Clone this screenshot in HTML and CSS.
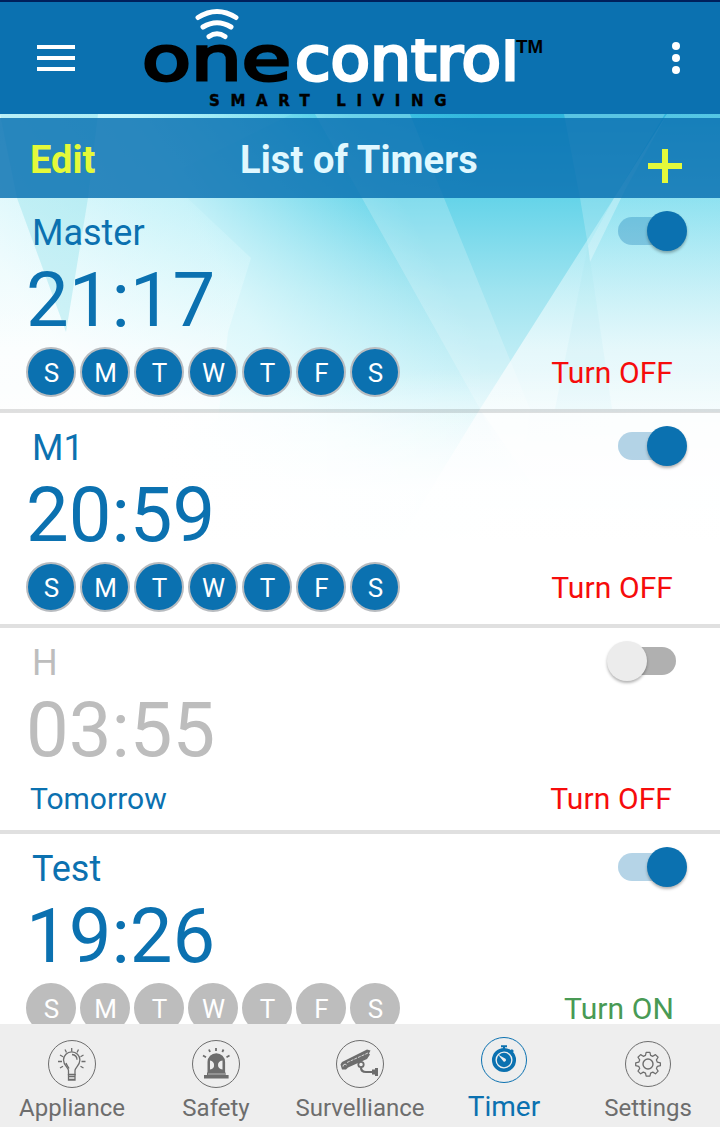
FILE: index.html
```html
<!DOCTYPE html>
<html lang="en">
<head>
  <meta charset="UTF-8">
  <meta name="viewport" content="width=device-width, initial-scale=1.0">
  <title>List of Timers</title>
  <link rel="stylesheet" href="styles.css">
</head>
<body>
  <svg class="backdrop" viewBox="0 0 720 1127" aria-hidden="true">
    <defs>
      <linearGradient id="sky" gradientUnits="userSpaceOnUse" x1="0" y1="114" x2="0" y2="540">
        <stop offset="0" stop-color="#2fb6dd"/>
        <stop offset="0.2" stop-color="#66d4e9"/>
        <stop offset="0.42" stop-color="#a0e4f0"/>
        <stop offset="0.68" stop-color="#d6f4f9"/>
        <stop offset="1" stop-color="#ffffff"/>
      </linearGradient>
      <linearGradient id="leftGlow" gradientUnits="userSpaceOnUse" x1="60" y1="370" x2="390" y2="180">
        <stop offset="0" stop-color="#fff" stop-opacity="0.9"/>
        <stop offset="0.5" stop-color="#f0feff" stop-opacity="0.68"/>
        <stop offset="1" stop-color="#e0fcff" stop-opacity="0"/>
      </linearGradient>
      <linearGradient id="topLeft" gradientUnits="userSpaceOnUse" x1="100" y1="0" x2="480" y2="0">
        <stop offset="0" stop-color="#74eef8" stop-opacity="0.9"/>
        <stop offset="1" stop-color="#74eef8" stop-opacity="0"/>
      </linearGradient>
      <linearGradient id="glow" gradientUnits="userSpaceOnUse" x1="0" y1="114" x2="0" y2="350">
        <stop offset="0" stop-color="#b9f5fb" stop-opacity="0.15"/>
        <stop offset="1" stop-color="#fff" stop-opacity="0.45"/>
      </linearGradient>
      <linearGradient id="glowRight" gradientUnits="userSpaceOnUse" x1="0" y1="114" x2="0" y2="350">
        <stop offset="0" stop-color="#b9f5fb" stop-opacity="0.25"/>
        <stop offset="1" stop-color="#fff" stop-opacity="0.62"/>
      </linearGradient>
      <linearGradient id="lowSides" gradientUnits="userSpaceOnUse" x1="150" y1="0" x2="720" y2="0">
        <stop offset="0" stop-color="#fff"/>
        <stop offset="0.56" stop-color="#fff" stop-opacity="0.1"/>
        <stop offset="1" stop-color="#fff" stop-opacity="0.5"/>
      </linearGradient>
      <linearGradient id="fadeLow" gradientUnits="userSpaceOnUse" x1="0" y1="370" x2="0" y2="490">
        <stop offset="0" stop-color="#fff" stop-opacity="0"/>
        <stop offset="1" stop-color="#fff" stop-opacity="0.85"/>
      </linearGradient>
    </defs>
    <rect width="720" height="1127" fill="#fff"/>
    <rect y="114" width="720" height="426" fill="url(#sky)"/>
    <rect y="114" width="480" height="84" fill="url(#topLeft)"/>
    <rect y="114" width="480" height="426" fill="url(#leftGlow)"/>
    <polygon points="0,114 292,114 165,177 251,258 228,332 218,420 0,540" fill="url(#glow)"/>
    <polygon points="17,198 88,198 66,332 58,310" fill="#8edfeb" opacity="0.38"/>
    <polygon points="0,114 98,114 88,198 17,198" fill="#3cc9df" opacity="0.2"/>
    <polygon points="315,114 480,409 520,490 530,409 444,198 410,114" fill="#fff" opacity="0.2"/>
    <polygon points="564,114 580,198 588,246 614,198 665,114" fill="#fff" opacity="0.2"/>
    <polygon points="667,114 720,114 720,540 400,540 480,409 614,198" fill="url(#glowRight)"/>
    <polygon points="667,114 614,198 588,246 590,262 625,190" fill="#fff" opacity="0.3"/>
    <polygon points="588,246 612,409 555,409" fill="#7fdcea" opacity="0.08"/>
    <rect y="370" width="720" height="170" fill="url(#fadeLow)"/>
    <rect y="412" width="720" height="128" fill="url(#lowSides)"/>
    <polygon points="482,412 720,412 720,540 570,540" fill="#fff" opacity="0.45"/>
  </svg>

  <div class="app">
    <header class="header">
      <svg class="menu-icon" viewBox="0 0 38 26">
        <path d="M0 2h38M0 13h38M0 24h38" stroke="#fff" stroke-width="4"/>
      </svg>
      <svg class="logo" viewBox="0 0 412 108">
        <defs>
          <clipPath id="logoClip"><rect x="158" y="35" width="230" height="50"/></clipPath>
        </defs>
        <g fill="none" stroke="#fff" stroke-width="5" stroke-linecap="round">
          <path d="M62 13.500Q81 1.500 100 13.500"/>
          <path d="M67 23Q81 14.500 95 23"/>
          <path d="M73 32.500Q81 27 89 32.500"/>
        </g>
        <g class="logo-word">
          <text x="6" y="76" textLength="149" lengthAdjust="spacingAndGlyphs" fill="#000" stroke="#000">one</text>
          <text x="159" y="76" textLength="224" lengthAdjust="spacingAndGlyphs" fill="#fff" stroke="#fff" clip-path="url(#logoClip)">control</text>
        </g>
        <text class="logo-tm" x="380" y="49" textLength="27" lengthAdjust="spacingAndGlyphs">TM</text>
        <text class="logo-tag" x="73" y="102">SMART LIVING</text>
      </svg>
      <svg class="more-icon" viewBox="0 0 8 32">
        <circle cx="4" cy="4" r="4"/><circle cx="4" cy="16" r="4"/><circle cx="4" cy="28" r="4"/>
      </svg>
    </header>

    <div class="title-bar">
      <span class="edit">Edit</span>
      <h1 class="title">List of Timers</h1>
      <svg class="add-icon" viewBox="0 0 34 34">
        <path d="M17 0v34M0 17h34" stroke="#e4f93a" stroke-width="6"/>
      </svg>
    </div>

    <main class="timers">
      <section class="timer">
        <div class="timer-head"><span class="name">Master</span><span class="switch on"></span></div>
        <div class="time">21:17</div>
        <div class="timer-foot">
          <div class="days"><span>S</span><span>M</span><span>T</span><span>W</span><span>T</span><span>F</span><span>S</span></div>
          <span class="action">Turn OFF</span>
        </div>
      </section>
      <section class="timer">
        <div class="timer-head"><span class="name">M1</span><span class="switch on"></span></div>
        <div class="time">20:59</div>
        <div class="timer-foot">
          <div class="days"><span>S</span><span>M</span><span>T</span><span>W</span><span>T</span><span>F</span><span>S</span></div>
          <span class="action">Turn OFF</span>
        </div>
      </section>
      <section class="timer once disabled">
        <div class="timer-head"><span class="name">H</span><span class="switch"></span></div>
        <div class="time">03:55</div>
        <div class="timer-foot">
          <span class="when">Tomorrow</span>
          <span class="action">Turn OFF</span>
        </div>
      </section>
      <section class="timer">
        <div class="timer-head"><span class="name">Test</span><span class="switch on"></span></div>
        <div class="time">19:26</div>
        <div class="timer-foot">
          <div class="days off"><span>S</span><span>M</span><span>T</span><span>W</span><span>T</span><span>F</span><span>S</span></div>
          <span class="action turn-on">Turn ON</span>
        </div>
      </section>
    </main>

    <nav class="tabs">
      <div class="tab">
        <svg class="tab-icon" viewBox="0 0 48 48" fill="none" stroke="currentColor">
          <circle cx="24" cy="24" r="23.500"/>
          <path d="M20.500 34.500v-4c0-3-5-5-5-10.500a8.200 8.200 0 0 1 16.400 0c0 5.500-4.900 7.500-4.900 10.500v4z" stroke-width="1.300"/>
          <path d="M20.500 36.500h6.500M21 39.500h5.500M20.500 34v6h6.500v-6M24 14.500c3 .3 5 2.300 5 5.300M18 23c.5 2 2 3.500 3 5.500" stroke-width="1.300"/>
          <path d="M23.700 8v3.500M17 9.500l1.500 3M30.500 9.500l-1.500 3M12 15l3 1.700M35.500 15l-3 1.700M10 21.500h4M33.500 21.500h4M12 28l3-1.800M35.500 28l-3-1.800" stroke-width="1.300"/>
        </svg>
        <span class="tab-label">Appliance</span>
      </div>
      <div class="tab">
        <svg class="tab-icon" viewBox="0 0 48 48" fill="none" stroke="currentColor">
          <circle cx="24" cy="24" r="23.500"/>
          <path d="M12 35h3v-2.500h.5V22a8.700 8.700 0 0 1 17.600 0v10.500h.5V35h3v3.500H12z" fill="currentColor" stroke="none"/>
          <path d="M18 20.500c5 0 6 9 0 9zM30.500 20.500c-6 0-6 9 0 9z" fill="#eee" stroke="none"/>
          <path d="M16 34h17" stroke="#eee" stroke-width=".6"/>
          <path d="M24 8v3M17 9.500l1 2.500M31.500 9.500l-1.200 2.500M11 15.500l3 1.700M37.500 15.500l-3 1.700" stroke-width="1.800"/>
        </svg>
        <span class="tab-label">Safety</span>
      </div>
      <div class="tab">
        <svg class="tab-icon" viewBox="0 0 48 48" fill="none" stroke="currentColor">
          <circle cx="24" cy="24" r="23.500"/>
          <path d="M4.500 24.500L6 22 31 9.500l3.500 1-1.500 3 1 1-3 4.500-19 8.500-2 2H6z" fill="currentColor" stroke="none"/>
          <path d="M11 22.500L32 13" stroke="#eee" stroke-width=".8" stroke-dasharray="3 1"/>
          <path d="M7 26.500a2 2 0 0 1 3.500-1.500" stroke="#eee"/>
          <circle cx="25" cy="24.500" r="2.700" stroke-width="1.800"/>
          <path d="M25 27.500q0 4.500 5 4.500h7" stroke-width="2.200"/>
          <path d="M36 29.500h3V28h3v8h-3v-1.500h-3z" fill="currentColor" stroke="none"/>
        </svg>
        <span class="tab-label">Survelliance</span>
      </div>
      <div class="tab active">
        <svg class="tab-icon" viewBox="0 0 46 46" fill="none" stroke="currentColor">
          <circle cx="23" cy="23" r="22.500"/>
          <circle cx="23" cy="23" r="10.300" stroke-width="3.500"/>
          <circle cx="23" cy="23" r="7.200" fill="currentColor" stroke="none"/>
          <path d="M23 13V9.500M20 9.300h6" stroke-width="2"/>
          <path d="M30 13l2 2" stroke-width="2.500"/>
          <path d="M17 17.500l7.500 4.300a1.500 1.500 0 0 1-2.200 2.400z" fill="#eee" stroke="none"/>
        </svg>
        <span class="tab-label">Timer</span>
      </div>
      <div class="tab settings">
        <svg class="tab-icon" viewBox="0 0 46 46" fill="none" stroke="currentColor">
          <circle cx="23" cy="23" r="22.500"/>
          <circle cx="23" cy="23" r="5" stroke-width="1.400"/>
          <path d="M21 11h4l.7 3.200 2.300 1 2.800-1.800 2.800 2.800-1.800 2.800 1 2.300 3.200.7v3l-3.200.7-1 2.300 1.800 2.800-2.800 2.800-2.800-1.800-2.300 1-.7 3.200h-4l-.7-3.200-2.300-1-2.800 1.800-2.800-2.800 1.800-2.800-1-2.300-3.200-.7v-3l3.200-.7 1-2.300-1.800-2.800 2.800-2.800 2.800 1.800 2.300-1z" transform="translate(1.200 0.900) scale(0.950)" stroke-width="1.300" stroke-linejoin="round"/>
        </svg>
        <span class="tab-label">Settings</span>
      </div>
    </nav>
  </div>
</body>
</html>
```
FILE: styles.css
```css
* {
  box-sizing: border-box;
}
body {
  margin: 0;
  font-family: Roboto, "Liberation Sans", sans-serif;
  background-color: #fff;
  color: #0b71b0;
}
.backdrop {
  position: absolute;
  top: 0;
  left: 0;
  width: 720px;
  height: 1127px;
}
.app {
  position: relative;
  width: 720px;
  height: 1127px;
  display: flex;
  flex-direction: column;
  overflow: hidden;
}
.header {
  height: 114px;
  flex-shrink: 0;
  border-top: 2px solid #00205b;
  background-color: #0b71b0;
  display: flex;
  align-items: center;
  padding: 0 40px 0 37px;
}
.menu-icon {
  width: 38px;
  height: 26px;
}
.logo {
  width: 412px;
  height: 108px;
  margin-left: 61px;
}
.logo-word {
  font-family: "DejaVu Sans", sans-serif;
  font-size: 60px;
  stroke-width: 3px;
}
.logo-tm {
  font-family: "Liberation Sans", sans-serif;
  font-size: 19px;
  font-weight: bold;
}
.logo-tag {
  font-family: "DejaVu Sans", sans-serif;
  font-size: 15px;
  font-weight: bold;
  letter-spacing: 10.6px;
  stroke: #000;
  stroke-width: 0.4px;
}
.more-icon {
  width: 8px;
  height: 32px;
  margin-left: auto;
  fill: #fff;
}
.title-bar {
  height: 80px;
  flex-shrink: 0;
  margin-top: 4px;
  padding: 0 38px 0 30px;
  display: grid;
  grid-template-columns: 210px 1fr auto;
  align-items: center;
  background-color: rgba(11, 113, 178, 0.84);
  font-size: 38px;
  font-weight: bold;
}
.edit {
  color: #e4f93a;
  line-height: 44px;
  margin-top: 4px;
}
.title {
  margin: 4px 0 0;
  font-size: 38px;
  line-height: 44px;
  letter-spacing: 0.1px;
  color: #e0f8ff;
}
.add-icon {
  width: 34px;
  height: 34px;
  margin-top: 16px;
}
.timers {
  flex: 1;
  min-height: 0;
  overflow: hidden;
}
.timer {
  height: 215px;
  padding: 14px 33px 0 26px;
  border-bottom: 4px solid rgba(0, 0, 0, 0.12);
}
.timer.once {
  height: 206px;
}
.timer-head {
  display: flex;
  justify-content: space-between;
  height: 42px;
}
.name {
  font-size: 36px;
  line-height: 42px;
  padding-left: 6px;
}
.time {
  font-size: 76px;
  line-height: 89px;
  margin-top: 2px;
}
.switch {
  position: relative;
  width: 58px;
  height: 28px;
  margin: 5px 11px 0 0;
  border-radius: 14px;
  background-color: #b0b0b0;
}
.switch::after {
  content: "";
  position: absolute;
  top: -6px;
  left: -11px;
  width: 40px;
  height: 40px;
  border-radius: 50%;
  background-color: #ececec;
  box-shadow: 0 2px 3px rgba(0, 0, 0, 0.3);
}
.switch.on {
  background-color: rgba(11, 113, 176, 0.3);
}
.switch.on::after {
  left: 29px;
  background-color: #0b71b0;
}
.timer-foot {
  display: flex;
  justify-content: space-between;
  align-items: center;
  height: 50px;
  margin-top: 2px;
  padding-right: 14px;
}
.once .timer-foot {
  margin-top: -2px;
  padding-right: 15px;
}
.days {
  display: flex;
  gap: 4px;
}
.days span {
  width: 50px;
  height: 50px;
  border: 2px solid #b8bcc0;
  border-radius: 50%;
  background-color: #0b71b0;
  color: #fff;
  font-size: 26px;
  line-height: 48px;
  text-align: center;
  padding-left: 1px;
}
.days.off span {
  background-color: #bdbdbd;
  border-color: #bdbdbd;
}
.action {
  font-size: 30px;
  line-height: 35px;
  letter-spacing: 0.1px;
  color: #f60c0c;
}
.action.turn-on {
  color: #499a55;
  margin-right: -1px;
}
.when {
  font-size: 30px;
  line-height: 35px;
  padding-left: 4px;
}
.disabled .name,
.disabled .time {
  color: #bdbdbd;
}
.tabs {
  height: 103px;
  flex-shrink: 0;
  background-color: #eee;
  display: grid;
  grid-template-columns: repeat(5, 1fr);
}
.tab {
  display: flex;
  flex-direction: column;
  align-items: center;
  padding-top: 16px;
  color: #6d6d6d;
}
.tab-icon {
  width: 48px;
  height: 48px;
}
.tab-label {
  font-size: 24px;
  line-height: 28px;
  margin-top: 6px;
}
.tab.active {
  padding-top: 13px;
  color: #0b71b0;
}
.active .tab-icon,
.settings .tab-icon {
  width: 46px;
  height: 46px;
}
.active .tab-label {
  font-size: 28px;
  line-height: 32px;
  margin-top: 8px;
}
.tab.settings {
  padding-top: 17px;
}
.settings .tab-label {
  margin-top: 7px;
}
```
